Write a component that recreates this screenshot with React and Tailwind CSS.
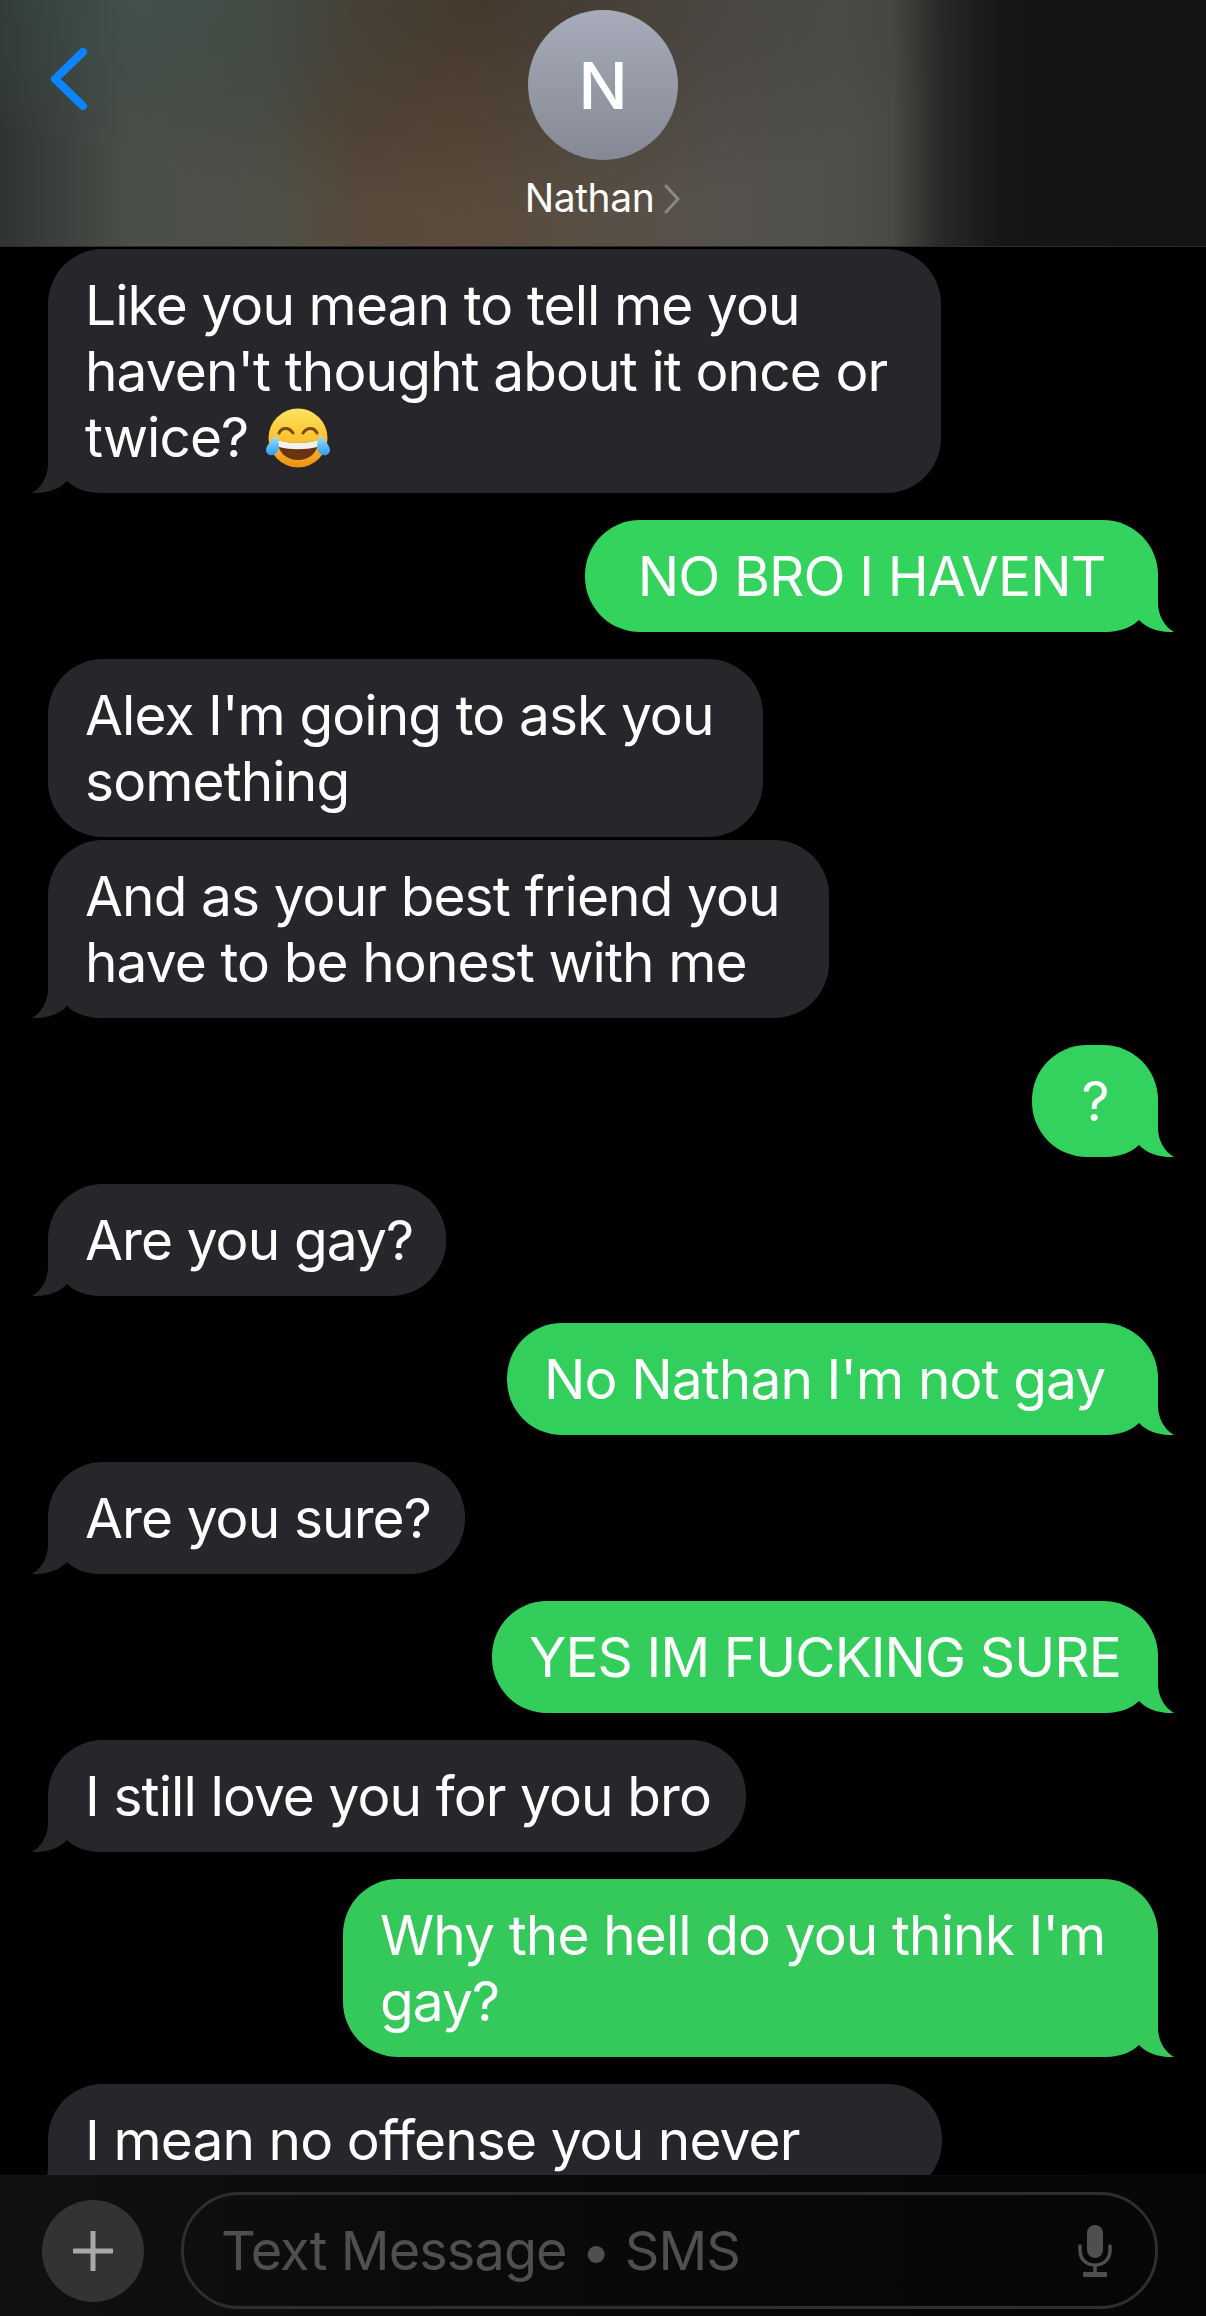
const sans = { fontFamily: 'Inter, "Liberation Sans", sans-serif' };

function Tail({ color, flip }) {
  return (
    <svg
      width="70"
      height="60"
      viewBox="0 0 70 60"
      className={flip ? "absolute bottom-0 right-[-16px] -scale-x-100" : "absolute bottom-0 left-[-16px]"}
    >
      <path d="M16 0 L16 31 C16 44 9 55 0 60 C12 60.500 25 58 35 48 C43 56 55 60 70 60 L70 0 Z" fill={color} />
    </svg>
  );
}

function LaughEmoji() {
  return (
    <svg width="66" height="60" viewBox="0 0 66 60" className="inline-block align-[-11px] ml-[2px]">
      <defs>
        <linearGradient id="face" x1="0" y1="0" x2="0" y2="1">
          <stop offset="0" stopColor="#fde35c" />
          <stop offset="0.55" stopColor="#fbc02d" />
          <stop offset="1" stopColor="#ee8f16" />
        </linearGradient>
        <linearGradient id="drop" x1="0" y1="0" x2="0" y2="1">
          <stop offset="0" stopColor="#a5e4ff" />
          <stop offset="1" stopColor="#2a9df0" />
        </linearGradient>
      </defs>
      <circle cx="33" cy="30" r="29.5" fill="url(#face)" />
      <path d="M14 25 C17 19 24 19 28 25" fill="none" stroke="#7a4a12" strokeWidth="3" strokeLinecap="round" />
      <path d="M38 25 C42 19 49 19 52 25" fill="none" stroke="#7a4a12" strokeWidth="3" strokeLinecap="round" />
      <path d="M12 32 C24 36 42 36 54 32 C53 45 44 52 33 52 C22 52 13 45 12 32 Z" fill="#6b3410" />
      <path d="M12.5 32 C24 36 42 36 53.5 32 C53.4 35 53 37 52 39 C40 42 26 42 14 39 C13 37 12.6 35 12.5 32 Z" fill="#f4f1ec" />
      <path d="M11 27 C6 33 1 38 1 42 C1 46 5 48 8 47 C12 46 14 42 14 38 C14 34 12 30 11 27 Z" fill="url(#drop)" />
      <path d="M55 27 C60 33 65 38 65 42 C65 46 61 48 58 47 C54 46 52 42 52 38 C52 34 54 30 55 27 Z" fill="url(#drop)" />
    </svg>
  );
}

function Bubble({ out, tail = true, color, widthClass, gapClass, center, children }) {
  return (
    <div className={`flex ${out ? "justify-end" : "justify-start"} ${gapClass}`}>
      <div
        className={`relative rounded-[55px] py-[23px] text-[55px] leading-[66px] tracking-[-0.9px] text-white whitespace-nowrap ${widthClass} ${
          center ? "text-center" : "pl-[37px]"
        }`}
        style={{ backgroundColor: color }}
      >
        {tail && <Tail color={color} flip={out} />}
        {/* Text sits above the tail shape */}
        <div className="relative">{children}</div>
      </div>
    </div>
  );
}

const GREY = "#26262b";

export default function App() {
  return (
    <div className="w-[1206px] h-[2316px] flex flex-col overflow-hidden bg-black" style={sans}>
      {/* Conversation header */}
      <header className="relative h-[247px] shrink-0 border-b border-[#2c2c2c] bg-[radial-gradient(ellipse_340px_150px_at_12%_0%,rgba(60,95,90,0.35),rgba(60,95,90,0)),radial-gradient(ellipse_500px_220px_at_40%_0%,rgba(0,0,0,0.25),rgba(0,0,0,0)),linear-gradient(to_right,#2f3432_0%,#4a4f49_11%,#4f5148_22%,#574a3c_29%,#5b4b3b_38%,#55524c_60%,#504f4a_70%,#4a4945_74%,#292927_78%,#161616_83%,#131313_100%)] flex flex-col items-center pt-[10px]">
        <svg width="40" height="64" viewBox="0 0 40 64" className="absolute left-[49px] top-[47px]">
          <path d="M34 5 L6 32 L34 59" fill="none" stroke="#0a84ff" strokeWidth="8" strokeLinecap="round" strokeLinejoin="round" />
        </svg>
        <div className="w-[150px] h-[150px] rounded-full bg-[linear-gradient(to_bottom,#a7acba,#858995)] flex items-center justify-center text-white text-[65px] font-medium leading-none">
          N
        </div>
        <div className="mt-[16px] flex items-center text-white text-[39px] tracking-[-0.4px] leading-[44px]">
          Nathan
          <svg width="18" height="30" viewBox="0 0 18 30" className="ml-[9px] mt-[2px]">
            <path d="M3 2 L15 15 L3 28" fill="none" stroke="#8b8987" strokeWidth="3" strokeLinecap="round" strokeLinejoin="round" />
          </svg>
        </div>
      </header>

      {/* Message thread */}
      <main className="flex-1 overflow-hidden px-[48px] pt-[2px]">
        <Bubble color={GREY} widthClass="w-[893px]" gapClass="mt-0">
          Like you mean to tell me you
          <br />
          haven't thought about it once or
          <br />
          twice? <LaughEmoji />
        </Bubble>
        <Bubble out color="#33d35e" widthClass="w-[573px]" gapClass="mt-[27px]" center>
          NO BRO I HAVENT
        </Bubble>
        <Bubble tail={false} color={GREY} widthClass="w-[715px]" gapClass="mt-[27px]">
          Alex I'm going to ask you
          <br />
          something
        </Bubble>
        <Bubble color={GREY} widthClass="w-[781px]" gapClass="mt-[3px]">
          And as your best friend you
          <br />
          have to be honest with me
        </Bubble>
        <Bubble out color="#33d15d" widthClass="w-[126px]" gapClass="mt-[27px]" center>
          ?
        </Bubble>
        <Bubble color={GREY} widthClass="w-[398px]" gapClass="mt-[27px]">
          Are you gay?
        </Bubble>
        <Bubble out color="#33cf5c" widthClass="w-[651px]" gapClass="mt-[27px]">
          No Nathan I'm not gay
        </Bubble>
        <Bubble color={GREY} widthClass="w-[417px]" gapClass="mt-[27px]">
          Are you sure?
        </Bubble>
        <Bubble out color="#33cd5b" widthClass="w-[666px]" gapClass="mt-[27px]">
          YES IM FUCKING SURE
        </Bubble>
        <Bubble color={GREY} widthClass="w-[698px]" gapClass="mt-[27px]">
          I still love you for you bro
        </Bubble>
        <Bubble out color="#34c95a" widthClass="w-[815px]" gapClass="mt-[27px]">
          Why the hell do you think I'm
          <br />
          gay?
        </Bubble>
        <Bubble color={GREY} widthClass="w-[894px]" gapClass="mt-[27px]">
          I mean no offense you never
        </Bubble>
      </main>

      {/* Composer */}
      <footer className="h-[141px] shrink-0 bg-[linear-gradient(to_right,#111111,#0a0a0a_40%,#060606)] flex items-start pl-[42px] pr-[48px] pt-[17px] gap-[37px]">
        <div className="mt-[8px] w-[102px] h-[102px] shrink-0 rounded-full bg-[#333335] flex items-center justify-center">
          <svg width="40" height="40" viewBox="0 0 40 40">
            <path d="M20 1 V39 M1 20 H39" stroke="#a9a9a9" strokeWidth="5" strokeLinecap="round" />
          </svg>
        </div>
        <div className="flex-1 h-[117px] rounded-[58px] border-[3px] border-[#2e2e2e] flex items-center pl-[37px] pr-[42px] justify-between">
          <span className="text-[#4f4f4f] text-[54px] tracking-[-0.9px] leading-none">Text Message • SMS</span>
          <svg width="36" height="52" viewBox="0 0 36 52">
            <rect x="10" y="0" width="16" height="33" rx="8" fill="#4f4f4f" />
            <path d="M3 21 V25 C3 34 9 40 18 40 C27 40 33 34 33 25 V21" fill="none" stroke="#4f4f4f" strokeWidth="3.5" strokeLinecap="round" />
            <path d="M18 40 V48" stroke="#4f4f4f" strokeWidth="3.5" />
            <rect x="6" y="47" width="24" height="5" rx="1" fill="#4f4f4f" />
          </svg>
        </div>
      </footer>
    </div>
  );
}
